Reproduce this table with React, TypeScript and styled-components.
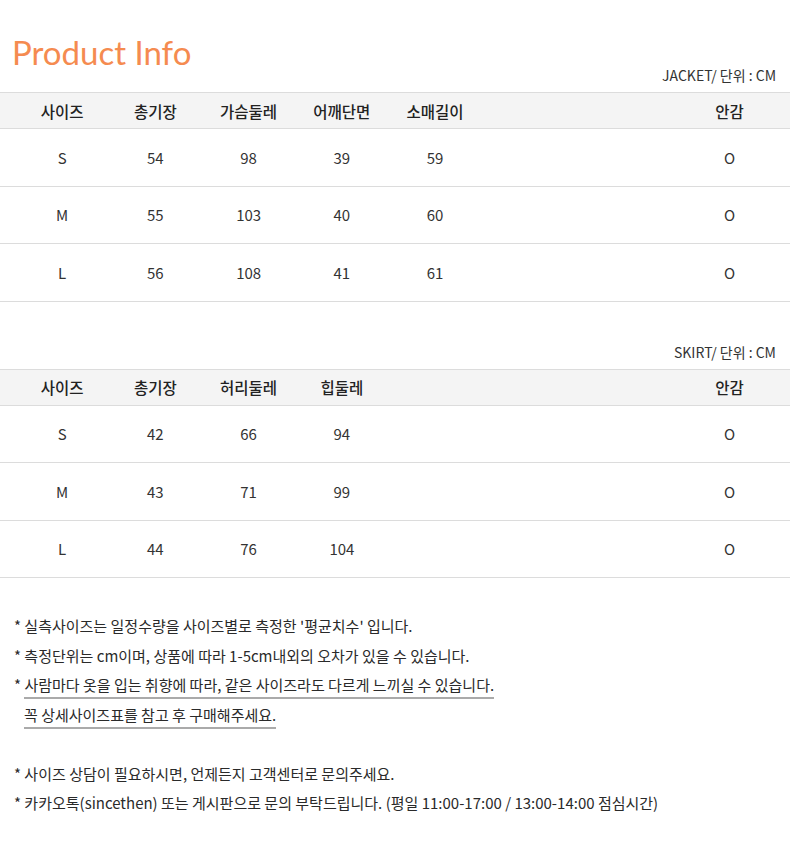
import React from "react";
import styled, { createGlobalStyle } from "styled-components";

const GlobalStyle = createGlobalStyle`
  body {
    margin: 0;
    background: #ffffff;
    font-family: "Noto Sans CJK KR", "Noto Sans", sans-serif;
    color: #333333;
  }
`;

interface SizeTableProps {
  label: string;
  headers: string[];
  rows: string[][];
}

const Page = styled.div`
  width: 790px;
  padding-top: 32px;
  padding-bottom: 40px;
`;

const Title = styled.h1`
  margin: 0;
  padding-left: 12px;
  font-family: Lato, "Noto Sans", sans-serif;
  font-weight: 400;
  font-size: 33px;
  line-height: 40px;
  color: #f58b50;
`;

const Section = styled.section<{ $gap: number }>`
  margin-top: ${(p) => p.$gap}px;
`;

const UnitLabel = styled.div`
  padding-right: 14px;
  text-align: right;
  font-size: 14px;
  line-height: 20px;
  color: #333333;
  margin-bottom: 7px;
`;

const Row = styled.div<{ $head?: boolean }>`
  display: grid;
  grid-template-columns: repeat(5, 93.25px) 1fr 93px;
  padding: 0 14px 0 15.5px;
  align-items: center;
  height: ${(p) => (p.$head ? "35px" : "56.5px")};
  background: ${(p) => (p.$head ? "#f4f4f4" : "#ffffff")};
  border-top: ${(p) => (p.$head ? "1px solid #dcdcdc" : "none")};
  border-bottom: 1px solid #dcdcdc;
`;

const Cell = styled.div<{ $head?: boolean }>`
  text-align: center;
  font-size: ${(p) => (p.$head ? "15.5px" : "15px")};
  font-weight: ${(p) => (p.$head ? 500 : 400)};
  color: ${(p) => (p.$head ? "#222222" : "#333333")};
  white-space: nowrap;
`;

const Notes = styled.div`
  margin-top: 33px;
  padding-left: 14px;
  font-size: 15px;
  line-height: 29.5px;
  color: #2a2a2a;
`;

const NoteLine = styled.p<{ $indent?: boolean }>`
  margin: 0;
  padding-left: ${(p) => (p.$indent ? "10px" : "0")};
  white-space: nowrap;
`;

const Underlined = styled.span`
  border-bottom: 2px solid #aaaaaa;
  padding-bottom: 2px;
`;

const Spacer = styled.div`
  height: 29.5px;
`;

const SizeTable = ({ label, headers, rows }: SizeTableProps) => {
  const fill = (cells: string[]) => {
    const main = cells.slice(0, cells.length - 1);
    while (main.length < 5) main.push("");
    return [...main, "", cells[cells.length - 1]];
  };
  return (
    <>
      <UnitLabel>{label}</UnitLabel>
      <Row $head>
        {fill(headers).map((h, i) => (
          <Cell $head key={i}>
            {h}
          </Cell>
        ))}
      </Row>
      {rows.map((r, ri) => (
        <Row key={ri}>
          {fill(r).map((c, i) => (
            <Cell key={i}>{c}</Cell>
          ))}
        </Row>
      ))}
    </>
  );
};

export default function App() {
  return (
    <Page>
      <GlobalStyle />
      <Title>Product Info</Title>
      <Section $gap={-7}>
        <SizeTable
          label="JACKET/ 단위 : CM"
          headers={["사이즈", "총기장", "가슴둘레", "어깨단면", "소매길이", "안감"]}
          rows={[
            ["S", "54", "98", "39", "59", "O"],
            ["M", "55", "103", "40", "60", "O"],
            ["L", "56", "108", "41", "61", "O"],
          ]}
        />
      </Section>
      <Section $gap={40}>
        <SizeTable
          label="SKIRT/ 단위 : CM"
          headers={["사이즈", "총기장", "허리둘레", "힙둘레", "안감"]}
          rows={[
            ["S", "42", "66", "94", "O"],
            ["M", "43", "71", "99", "O"],
            ["L", "44", "76", "104", "O"],
          ]}
        />
      </Section>
      <Notes>
        <NoteLine>* 실측사이즈는 일정수량을 사이즈별로 측정한 '평균치수' 입니다.</NoteLine>
        <NoteLine>* 측정단위는 cm이며, 상품에 따라 1-5cm내외의 오차가 있을 수 있습니다.</NoteLine>
        <NoteLine>
          * <Underlined>사람마다 옷을 입는 취향에 따라, 같은 사이즈라도 다르게 느끼실 수 있습니다.</Underlined>
        </NoteLine>
        <NoteLine $indent>
          <Underlined>꼭 상세사이즈표를 참고 후 구매해주세요.</Underlined>
        </NoteLine>
        <Spacer />
        <NoteLine>* 사이즈 상담이 필요하시면, 언제든지 고객센터로 문의주세요.</NoteLine>
        <NoteLine>
          * 카카오톡(sincethen) 또는 게시판으로 문의 부탁드립니다. (평일 11:00-17:00 / 13:00-14:00 점심시간)
        </NoteLine>
      </Notes>
    </Page>
  );
}
